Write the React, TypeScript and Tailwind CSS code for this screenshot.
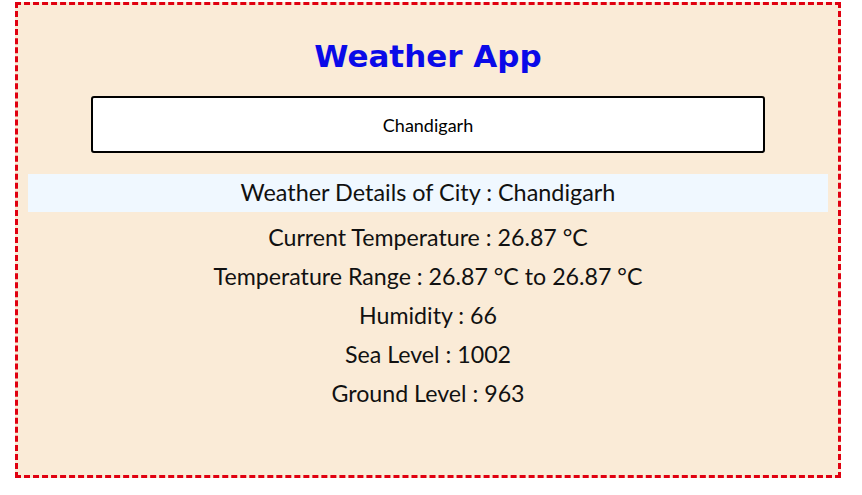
const details = [
  "Current Temperature : 26.87 °C",
  "Temperature Range : 26.87 °C to 26.87 °C",
  "Humidity : 66",
  "Sea Level : 1002",
  "Ground Level : 963",
];

const App = () => {
  return (
    <div className="pt-[2px] pl-[15px] bg-white w-[862px] h-[495px]">
      <div className="w-[826px] h-[476px] border-[3px] border-dashed border-[#e00010] bg-[#faebd7] flex flex-col">
        <h1 className="mt-[31px] text-center text-[31px] leading-[40px] font-bold text-[#0a0ae8] font-['DejaVu_Sans',sans-serif]">
          Weather App
        </h1>
        <div className="mt-[20px] flex justify-center">
          <input
            defaultValue="Chandigarh"
            className="w-[674px] h-[57px] border-2 border-black rounded-[3px] bg-white text-center text-[18px] text-black font-['Lato',sans-serif] outline-none"
          />
        </div>
        <div className="mt-[21px] mx-[10px] h-[38px] bg-[#f0f8ff] flex items-center justify-center text-[23.4px] text-[#111] font-['Lato',sans-serif]">
          Weather Details of City : Chandigarh
        </div>
        <div className="mt-[6px] flex flex-col items-center text-[23.2px] text-[#111] font-['Lato',sans-serif]">
          {details.map((d) => (
            <p key={d} className="leading-[39px]">
              {d}
            </p>
          ))}
        </div>
      </div>
    </div>
  );
};

export default App;
